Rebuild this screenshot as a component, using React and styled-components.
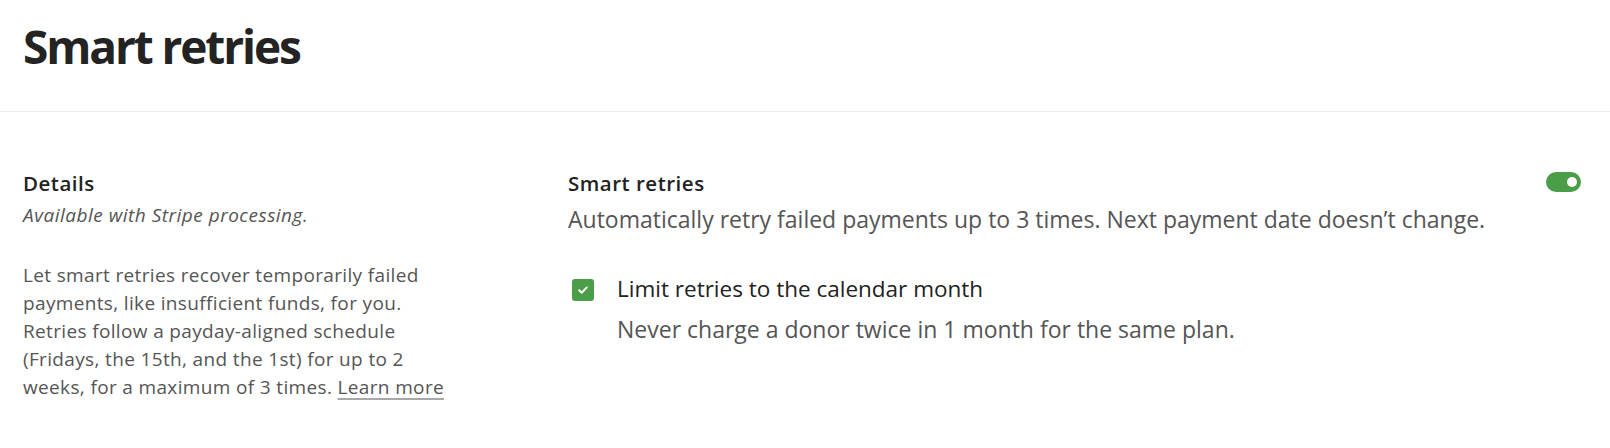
import React, { useState } from 'react';
import styled, { createGlobalStyle } from 'styled-components';

const GlobalStyle = createGlobalStyle`
    body {
        margin: 0;
        background: #ffffff;
        font-family: 'Open Sans', 'Liberation Sans', sans-serif;
        color: #222222;
    }
`;

export default function App() {
    const [enabled, setEnabled] = useState(true);
    const [limit, setLimit] = useState(true);

    return (
        <Page>
            <GlobalStyle />
            <Header>
                <Title>Smart retries</Title>
            </Header>
            <Body>
                <Aside>
                    <SectionTitle>Details</SectionTitle>
                    <Note>Available with Stripe processing.</Note>
                    <Paragraph>
                        Let smart retries recover temporarily failed payments, like insufficient
                        funds, for you. Retries follow a payday-aligned schedule (Fridays, the 15th,
                        and the 1st) for up to 2 weeks, for a maximum of 3 times.{' '}
                        <LearnMore href="#">Learn more</LearnMore>
                    </Paragraph>
                </Aside>
                <Settings>
                    <SettingRow>
                        <SettingText>
                            <SectionTitle>Smart retries</SectionTitle>
                            <Description>
                                Automatically retry failed payments up to 3 times. Next payment date
                                doesn’t change.
                            </Description>
                        </SettingText>
                        <Toggle
                            type="button"
                            role="switch"
                            aria-checked={enabled}
                            $on={enabled}
                            onClick={() => setEnabled(!enabled)}
                        >
                            <Knob $on={enabled} />
                        </Toggle>
                    </SettingRow>
                    <Option>
                        <Checkbox
                            type="button"
                            role="checkbox"
                            aria-checked={limit}
                            $checked={limit}
                            onClick={() => setLimit(!limit)}
                        >
                            {limit && (
                                <svg width="14" height="14" viewBox="0 0 14 14" fill="none">
                                    <path
                                        d="M3.2 7.3l2.5 2.5L10.8 4.4"
                                        stroke="#fff"
                                        strokeWidth="2"
                                        strokeLinecap="round"
                                        strokeLinejoin="round"
                                    />
                                </svg>
                            )}
                        </Checkbox>
                        <OptionText>
                            <OptionLabel>Limit retries to the calendar month</OptionLabel>
                            <Description>
                                Never charge a donor twice in 1 month for the same plan.
                            </Description>
                        </OptionText>
                    </Option>
                </Settings>
            </Body>
        </Page>
    );
}

const Page = styled.div`
    width: 100%;
    min-height: 448px;
`;

const Header = styled.header`
    padding: 14px 29px 33px 23px;
    border-bottom: 1px solid #ececec;
`;

const Title = styled.h1`
    margin: 0;
    font-size: 46px;
    line-height: 64px;
    font-weight: 700;
    letter-spacing: -2.1px;
    color: #232323;
`;

const Body = styled.main`
    display: grid;
    grid-template-columns: 513px 1fr;
    column-gap: 32px;
    padding: 55px 29px 30px 23px;
`;

const Aside = styled.section`
    max-width: 432px;
`;

const SectionTitle = styled.h2`
    margin: 0;
    font-size: 20.5px;
    line-height: 32px;
    font-weight: 600;
    letter-spacing: 0.5px;
    color: #222222;
`;

const Note = styled.p`
    margin: 0;
    font-size: 19px;
    line-height: 32px;
    font-style: italic;
    letter-spacing: 0.5px;
    color: #555555;
`;

const Paragraph = styled.p`
    margin: 30px 0 0;
    font-size: 19px;
    line-height: 28px;
    letter-spacing: 0.35px;
    color: #555555;
`;

const LearnMore = styled.a`
    color: #555555;
    text-decoration: underline;
    text-decoration-color: #a8a8a8;
    text-underline-offset: 4px;
    text-decoration-thickness: 1.5px;
`;

const Settings = styled.section`
    display: flex;
    flex-direction: column;
    gap: 36px;
`;

const SettingRow = styled.div`
    display: flex;
    justify-content: space-between;
    align-items: flex-start;
`;

const SettingText = styled.div`
    display: flex;
    flex-direction: column;
    gap: 2px;
`;

const Description = styled.p`
    margin: 0;
    font-size: 23px;
    line-height: 36px;
    color: #555555;
`;

const Toggle = styled.button`
    flex: none;
    position: relative;
    width: 35px;
    height: 20px;
    margin-top: 5px;
    padding: 0;
    border: none;
    border-radius: 10px;
    background: ${(p) => (p.$on ? '#4a9e48' : '#c9c9c9')};
    cursor: pointer;
`;

const Knob = styled.span`
    position: absolute;
    top: 5px;
    left: ${(p) => (p.$on ? '21px' : '5px')};
    width: 10px;
    height: 10px;
    border-radius: 50%;
    background: #ffffff;
`;

const Option = styled.div`
    display: flex;
    align-items: flex-start;
    gap: 23px;
    padding-left: 4px;
`;

const Checkbox = styled.button`
    flex: none;
    display: flex;
    align-items: center;
    justify-content: center;
    width: 22px;
    height: 22px;
    margin-top: 6px;
    padding: 0;
    border: none;
    border-radius: 3px;
    background: ${(p) => (p.$checked ? '#4a9e48' : '#ffffff')};
    box-shadow: ${(p) => (p.$checked ? 'none' : 'inset 0 0 0 1px #bbb')};
    cursor: pointer;
`;

const OptionText = styled.div`
    display: flex;
    flex-direction: column;
    gap: 6px;
`;

const OptionLabel = styled.span`
    font-size: 22.5px;
    line-height: 32px;
    color: #222222;
`;
